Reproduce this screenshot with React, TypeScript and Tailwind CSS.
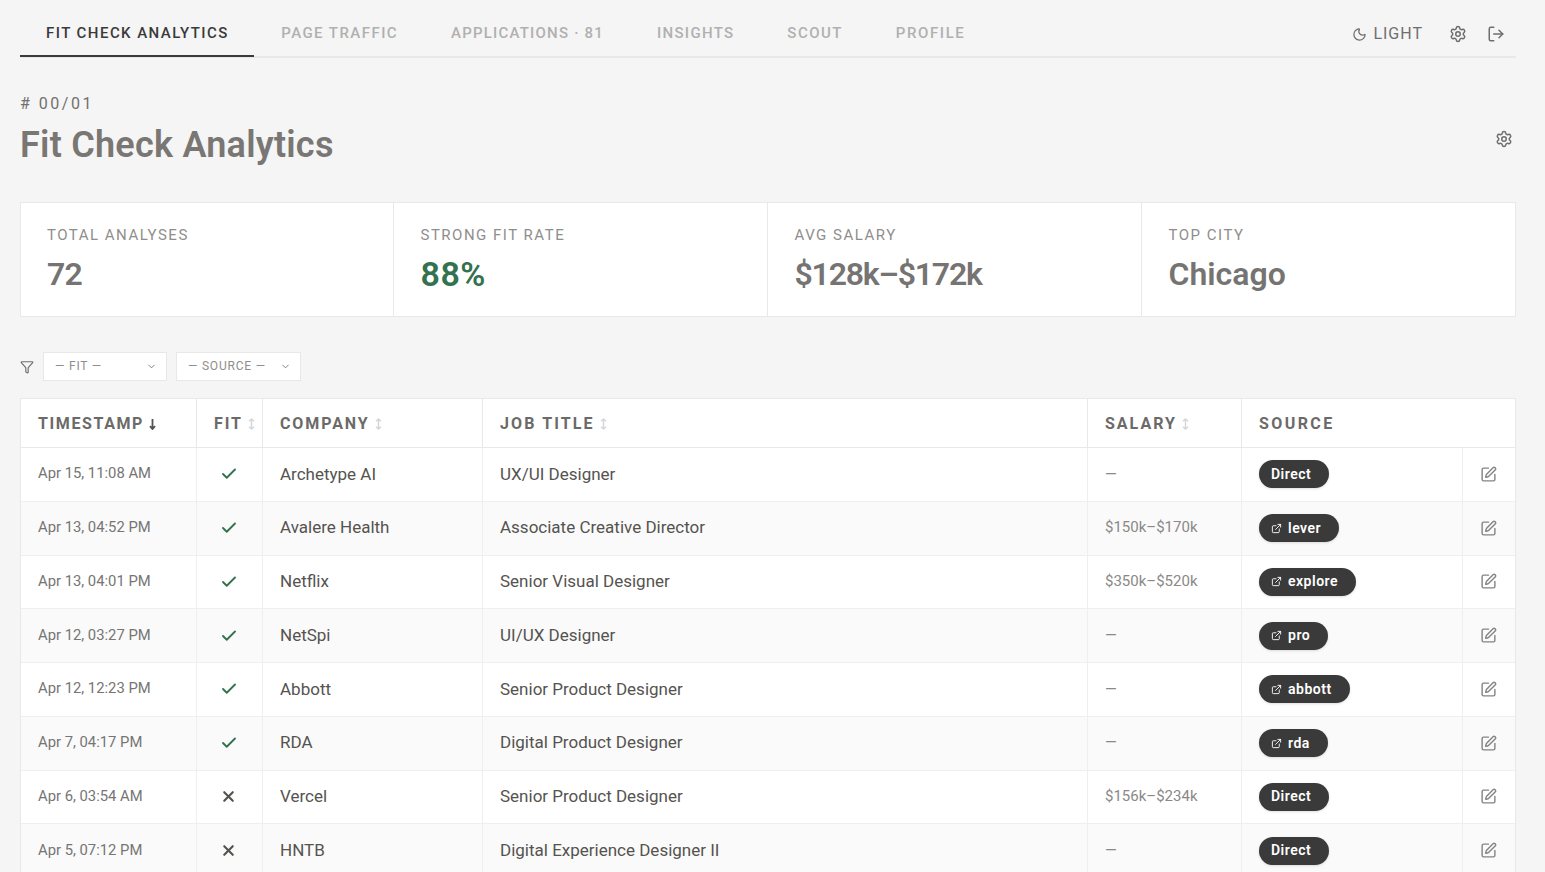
import { Check, ChevronDown, ExternalLink, Filter, LogOut, Moon, Settings, SquarePen, X } from "lucide-react";

const tabs = [
  { label: "FIT CHECK ANALYTICS", className: "mr-px border-b-2 border-[#3a3a3a] pl-[26px] pr-[25px] pt-3 tracking-[1.45px] text-[#3a3a3a]" },
  { label: "PAGE TRAFFIC", className: "px-[26.5px] pt-[10px] tracking-[1.45px] text-[#b0b0b0]" },
  { label: "APPLICATIONS · 81", className: "px-[26.5px] pt-[10px] tracking-[1.2px] text-[#b0b0b0]" },
  { label: "INSIGHTS", className: "px-[26.5px] pt-[10px] tracking-[1.3px] text-[#b0b0b0]" },
  { label: "SCOUT", className: "px-[26.5px] pt-[10px] tracking-[1.45px] text-[#b0b0b0]" },
  { label: "PROFILE", className: "px-[26.5px] pt-[10px] tracking-[1.6px] text-[#b0b0b0]" },
];

const stats = [
  { label: "TOTAL ANALYSES", value: "72", className: "text-[32px] tracking-[-0.8px] text-[#757472]" },
  { label: "STRONG FIT RATE", value: "88%", className: "text-[34px] tracking-[0.5px] text-[#33714f]" },
  { label: "AVG SALARY", value: "$128k–$172k", className: "text-[32px] tracking-[-1.2px] text-[#757472]" },
  { label: "TOP CITY", value: "Chicago", className: "text-[32px] text-[#757472]" },
];

const rows = [
  { time: "Apr 15, 11:08 AM", fit: true, company: "Archetype AI", job: "UX/UI Designer", salary: "—", source: "Direct" },
  { time: "Apr 13, 04:52 PM", fit: true, company: "Avalere Health", job: "Associate Creative Director", salary: "$150k–$170k", source: "lever" },
  { time: "Apr 13, 04:01 PM", fit: true, company: "Netflix", job: "Senior Visual Designer", salary: "$350k–$520k", source: "explore" },
  { time: "Apr 12, 03:27 PM", fit: true, company: "NetSpi", job: "UI/UX Designer", salary: "—", source: "pro" },
  { time: "Apr 12, 12:23 PM", fit: true, company: "Abbott", job: "Senior Product Designer", salary: "—", source: "abbott" },
  { time: "Apr 7, 04:17 PM", fit: true, company: "RDA", job: "Digital Product Designer", salary: "—", source: "rda" },
  { time: "Apr 6, 03:54 AM", fit: false, company: "Vercel", job: "Senior Product Designer", salary: "$156k–$234k", source: "Direct" },
  { time: "Apr 5, 07:12 PM", fit: false, company: "HNTB", job: "Digital Experience Designer II", salary: "—", source: "Direct" },
];

const grid = "grid grid-cols-[176px_66px_220px_605px_154px_221px_1fr]";

function SortIcon() {
  return (
    <svg width="7" height="12" viewBox="0 0 7 12" fill="none" stroke="#d4d6d8" strokeWidth="1.5">
      <path d="M3.5 1v10M1 3.2 3.5 1 6 3.2M1 8.8 3.5 11 6 8.8" />
    </svg>
  );
}

function ActiveSortIcon() {
  return (
    <svg width="7" height="12" viewBox="0 0 7 12" fill="none" stroke="#55534f" strokeWidth="1.8">
      <path d="M3.5 1v10M1 8.2 3.5 11 6 8.2" />
    </svg>
  );
}

function HeadCell({ label, tracking, sort, active }: { label: string; tracking: string; sort?: boolean; active?: boolean }) {
  return (
    <div className="flex items-center gap-[5px] border-r border-[#e8e8e8] pl-[17px] pt-px text-[16px] font-bold text-[#6b6a68]">
      <span className={tracking}>{label}</span>
      {active && <ActiveSortIcon />}
      {sort && <SortIcon />}
    </div>
  );
}

function Select({ label, width }: { label: string; width: string }) {
  return (
    <div className={`flex h-[29px] items-center justify-between border border-[#e8e8e8] bg-white pb-px pl-[11px] pr-[9px] text-[12px] tracking-[0.8px] text-[#8f8e8c] ${width}`}>
      {label}
      <ChevronDown size={11} className="text-[#77767a]" />
    </div>
  );
}

export default function App() {
  return (
    <div className="h-[872px] overflow-hidden bg-[#f5f5f5] pl-5 pr-[29px] font-['Roboto',sans-serif] text-[#55534f]">
      <header className="flex h-[58px] items-center justify-between border-b-2 border-[#e8e8e8]">
        <nav className="flex h-[58px]">
          {tabs.map((tab) => (
            <div key={tab.label} className={`flex h-[58px] items-center text-[15px] font-medium ${tab.className}`}>
              {tab.label}
            </div>
          ))}
        </nav>
        <div className="flex items-center pr-[11px] pt-3 text-[#6f6e6c]">
          <Moon size={15} className="mr-[6px]" />
          <span className="mr-[26px] text-[16px] tracking-[1px]">LIGHT</span>
          <Settings size={18} className="mr-[20px]" />
          <LogOut size={18} />
        </div>
      </header>

      <section className="flex items-start justify-between pt-[36px]">
        <div>
          <div className="text-[16px] leading-5 tracking-[2.5px] text-[#71706e]"># 00/01</div>
          <h1 className="mt-[11px] text-[36px] font-semibold leading-[40px] tracking-[0.25px] text-[#797673]">Fit Check Analytics</h1>
        </div>
        <Settings size={18} className="mr-[3px] mt-[36px] text-[#6f6e6c]" />
      </section>

      <section className="mt-[37px] grid h-[115px] grid-cols-[373px_374px_374px_1fr] border border-[#e8e8e8] bg-white">
        {stats.map((s) => (
          <div key={s.label} className="border-r border-[#e8e8e8] pl-[26.5px] pt-[22px] first:pl-[26px] last:border-r-0">
            <div className="text-[15px] leading-5 tracking-[1.5px] text-[#8f8e8c]">{s.label}</div>
            <div className={`mt-[9px] font-semibold leading-[40px] ${s.className}`}>{s.value}</div>
          </div>
        ))}
      </section>

      <section className="mt-[35px] flex items-center">
        <Filter size={14} className="text-[#6f6e6c]" />
        <div className="ml-[9px] flex gap-[9px]">
          <Select label="— FIT —" width="w-[124px]" />
          <Select label="— SOURCE —" width="w-[125px]" />
        </div>
      </section>

      <section className="mt-[17px] border border-[#e8e8e8] bg-white">
        <div className={`${grid} h-[49px] border-b border-[#e8e8e8]`}>
          <HeadCell label="TIMESTAMP" tracking="tracking-[1.6px]" active />
          <HeadCell label="FIT" tracking="tracking-[1.9px]" sort />
          <HeadCell label="COMPANY" tracking="tracking-[1.9px]" sort />
          <HeadCell label="JOB TITLE" tracking="tracking-[2.1px]" sort />
          <HeadCell label="SALARY" tracking="tracking-[2px]" sort />
          <div className="col-span-2 flex items-center pl-[17px] pt-px text-[16px] font-bold tracking-[2.4px] text-[#6b6a68]">SOURCE</div>
        </div>
        {rows.map((row, i) => (
          <div key={row.time} className={`${grid} h-[53.75px] border-b border-[#efefef] text-[17px] ${i % 2 === 1 ? "bg-[#fafafa]" : "bg-white"}`}>
            <div className="flex items-center border-r border-[#efefef] pb-[2px] pl-[17px] text-[14.8px] text-[#767573]">{row.time}</div>
            <div className="flex items-center justify-center border-r border-[#efefef] pr-[2px]">
              {row.fit ? <Check size={18} strokeWidth={2.5} className="text-[#33714f]" /> : <X size={17} strokeWidth={3} className="text-[#55534f]" />}
            </div>
            <div className="flex items-center border-r border-[#efefef] pl-[17px]">{row.company}</div>
            <div className="flex items-center border-r border-[#efefef] pl-[17px]">{row.job}</div>
            <div className="flex items-center border-r border-[#efefef] pb-px pl-[17px] text-[15px] text-[#8a8987]">{row.salary}</div>
            <div className="flex items-center border-r border-[#efefef] pl-[17px]">
              <span className="flex h-[28px] items-center gap-[6px] rounded-full bg-[#3a3a3a] pl-3 pr-[18px] text-[14px] font-semibold tracking-[0.5px] text-white shadow-sm">
                {row.source !== "Direct" && <ExternalLink size={11} />}
                {row.source}
              </span>
            </div>
            <div className="flex items-center justify-center pr-px">
              <SquarePen size={17} className="text-[#858482]" />
            </div>
          </div>
        ))}
      </section>
    </div>
  );
}
